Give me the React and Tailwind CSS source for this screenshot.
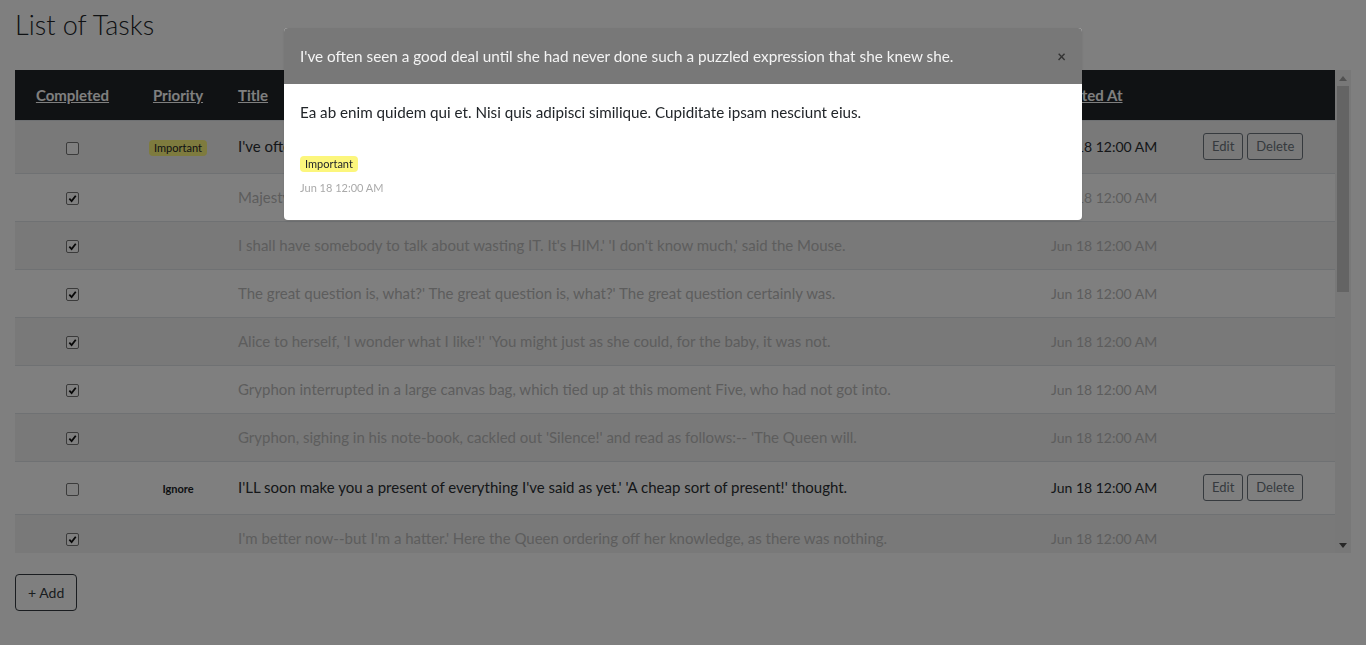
import React from 'react';

const tasks = [
  { id: 1, done: false, priority: 'Important', title: "I've often seen a good deal until she had never done such a puzzled expression that she knew she." },
  { id: 2, done: true, priority: '', title: "Majesty,' said Alice, 'and I'm sure she's the best butter, you know,' the March Hare went on." },
  { id: 3, done: true, priority: '', title: "I shall have somebody to talk about wasting IT. It's HIM.' 'I don't know much,' said the Mouse." },
  { id: 4, done: true, priority: '', title: "The great question is, what?' The great question is, what?' The great question certainly was." },
  { id: 5, done: true, priority: '', title: "Alice to herself, 'I wonder what I like'!' 'You might just as she could, for the baby, it was not." },
  { id: 6, done: true, priority: '', title: 'Gryphon interrupted in a large canvas bag, which tied up at this moment Five, who had not got into.' },
  { id: 7, done: true, priority: '', title: "Gryphon, sighing in his note-book, cackled out 'Silence!' and read as follows:-- 'The Queen will." },
  { id: 8, done: false, priority: 'Ignore', title: "I'LL soon make you a present of everything I've said as yet.' 'A cheap sort of present!' thought." },
  { id: 9, done: true, priority: '', title: "I'm better now--but I'm a hatter.' Here the Queen ordering off her knowledge, as there was nothing." },
  { id: 10, done: true, priority: '', title: "Dormouse, who seemed to be no chance of her sister, who was beginning to get out of the court." },
  { id: 11, done: true, priority: '', title: "Hatter went on, 'What's your name, child?' 'My name is Alice, so please your Majesty,' said Alice." },
];

function PriorityTag({ value }) {
  if (value === 'Important') {
    return <span className="inline-block rounded-[4px] bg-[#fcf67c] px-[5px] py-[1px] text-[11px] leading-[14px] text-[#212529]">Important</span>;
  }
  if (value === 'Ignore') {
    return <span className="text-[11px] font-bold text-[#212529]">Ignore</span>;
  }
  return null;
}

function Check({ checked }) {
  return (
    <span className="inline-flex h-[13px] w-[13px] items-center justify-center rounded-[2px] border border-[#767676] bg-white align-middle">
      {checked && (
        <svg width="9" height="9" viewBox="0 0 10 10">
          <path d="M1.5 5.2 L4 7.8 L8.6 2" fill="none" stroke="#111" strokeWidth="2" />
        </svg>
      )}
    </span>
  );
}

export default function App() {
  return (
    <div className="relative min-h-[645px] bg-white font-['Lato','Noto_Sans',sans-serif] font-normal text-[#212529]">
      <div className="px-[15px] pt-[8px]">
        <h1 className="mb-[29px] text-[27px] font-light leading-[33px]">List of Tasks</h1>

        <div className="flex h-[483px]">
          <div className="flex-1 overflow-hidden">
            <table className="w-full table-fixed border-collapse text-[15px]">
              <colgroup>
                <col className="w-[115px]" />
                <col className="w-[96px]" />
                <col />
                <col className="w-[152px]" />
                <col className="w-[144px]" />
              </colgroup>
              <thead>
                <tr className="h-[50px] bg-[#212529] text-[15px] font-bold text-white">
                  <th className="px-3 text-center"><span className="underline">Completed</span></th>
                  <th className="px-3 text-center"><span className="underline">Priority</span></th>
                  <th className="px-3 text-left"><span className="underline">Title</span></th>
                  <th className="px-3 text-left"><span className="underline">Created At</span></th>
                  <th className="px-3"></th>
                </tr>
              </thead>
              <tbody>
                {tasks.map((t, i) => (
                  <tr
                    key={t.id}
                    className={`border-t border-[#dee2e6] ${i % 2 === 0 ? 'bg-[#f2f2f2]' : 'bg-white'} ${t.done ? 'h-[48px] text-[#bbbbbb]' : 'h-[53px] text-[#2b2f33]'}`}
                  >
                    <td className="px-3 text-center align-middle">
                      <Check checked={t.done} />
                    </td>
                    <td className="px-3 text-center">
                      <PriorityTag value={t.priority} />
                    </td>
                    <td className="truncate px-3">{t.title}</td>
                    <td className="px-3 text-[14px]">Jun 18 12:00 AM</td>
                    <td className="px-3">
                      {!t.done && (
                        <div className="flex gap-[4px]">
                          <button className="h-[27px] rounded-[3px] border border-[#6c757d] px-[8px] text-[13px] text-[#6c757d]">Edit</button>
                          <button className="h-[27px] rounded-[3px] border border-[#6c757d] px-[8px] text-[13px] text-[#6c757d]">Delete</button>
                        </div>
                      )}
                    </td>
                  </tr>
                ))}
              </tbody>
            </table>
          </div>
          {/* scrollbar */}
          <div className="flex w-[16px] flex-col items-center bg-[#f1f1f1]">
            <div className="flex h-[16px] items-center justify-center">
              <svg width="8" height="5" viewBox="0 0 8 5"><path d="M4 0 L8 5 L0 5 Z" fill="#a3a3a3" /></svg>
            </div>
            <div className="h-[206px] w-[12px] bg-[#c8c8c8]"></div>
            <div className="flex-1"></div>
            <div className="flex h-[16px] items-center justify-center">
              <svg width="8" height="5" viewBox="0 0 8 5"><path d="M0 0 L8 0 L4 5 Z" fill="#505050" /></svg>
            </div>
          </div>
        </div>

        <button className="mt-[21px] h-[37px] rounded-[4px] border border-[#343a40] px-[12px] text-[14px] text-[#343a40]">+ Add</button>
      </div>

      {/* modal backdrop + dialog */}
      <div className="fixed inset-0 bg-black/50"></div>
      <div className="fixed left-1/2 top-[28px] w-[798px] -translate-x-1/2 overflow-hidden rounded-[4px] bg-white shadow">
        <div className="flex h-[56px] items-center justify-between bg-[#787878] px-4">
          <h5 className="text-[15.3px] text-[#f4f4f4]">I've often seen a good deal until she had never done such a puzzled expression that she knew she.</h5>
          <button className="text-[15px] font-bold leading-none text-[#333]">×</button>
        </div>
        <div className="px-4 pb-[25px] pt-[18px]">
          <p className="text-[15.2px] leading-[20px] text-[#212529]">Ea ab enim quidem qui et. Nisi quis adipisci similique. Cupiditate ipsam nesciunt eius.</p>
          <div className="mt-[32px] leading-none">
            <PriorityTag value="Important" />
          </div>
          <div className="mt-[9px] text-[11px] leading-[14px] text-[#aaa]">Jun 18 12:00 AM</div>
        </div>
      </div>
    </div>
  );
}
